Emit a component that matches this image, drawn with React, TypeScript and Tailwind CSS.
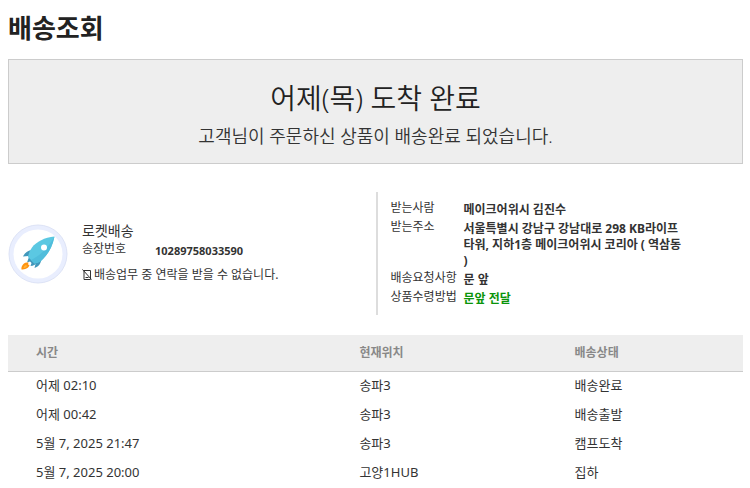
type Row = {
	time: string
	place: string
	status: string
}

const rows: Row[] = [
	{ time: '어제 02:10', place: '송파3', status: '배송완료' },
	{ time: '어제 00:42', place: '송파3', status: '배송출발' },
	{ time: '5월 7, 2025 21:47', place: '송파3', status: '캠프도착' },
	{ time: '5월 7, 2025 20:00', place: '고양1HUB', status: '집하' }
]

function Rocket() {
	return (
		<svg viewBox="0 0 60 60" className="size-15 shrink-0" aria-hidden="true">
			<circle cx="30" cy="30" r="29" fill="#e9eefe" stroke="#dde3f6" strokeWidth="1" />
			<circle cx="30" cy="30" r="24.500" fill="#fff" />
			<path d="M27 26.500c-5-1.200-9.500.5-12 6l5.500-.5 3 2z" fill="#4197bb" />
			<path d="M33 33l-5 5-1.500 6c4.500-1.500 7-5 7-11z" fill="#4197bb" />
			<path d="M21 33l-2 5.500 3-1 1.500 1.500-1 3c3 0 5-1.500 6.500-3.500z" fill="#4197bb" />
			<path
				d="M46.500 12.500c-10 1-18 5-22.500 11-2 3-3.500 6-4 9.500l6.500 6.500c3.500-.5 6-2 8.500-4.500 5.500-5.500 9.500-12.500 11.500-22.500z"
				fill="#5bc8e2"
			/>
			<path d="M46.500 12.500C42 21 33 31.500 23 36l3.500 3.500c3.500-.5 6-2 8.500-4.500 5.500-5.500 9.500-12.500 11.500-22.500z" fill="#50bddb" />
			<path d="M18.500 38.500c-3 .5-5.500 3.500-5 7 3.500 0 7-1 8-4.500l-1.500-.5.500-2z" fill="#ff9412" />
			<path d="M18 41c-1.500.5-2.500 2-2.500 3 1.500 0 3-.5 3.500-2z" fill="#ffb43b" />
			<circle cx="36" cy="23.500" r="3" fill="#fff" />
		</svg>
	)
}

function PhoneOff() {
	return (
		<svg viewBox="0 0 10 12" className="h-3 w-2.5" fill="none" stroke="#333" aria-hidden="true">
			<path d="M2 1.500h6.500v9H2zM3.500 8.500h3M.5.500l9 10" />
		</svg>
	)
}

export default function App() {
	return (
		<main className="min-w-[640px] pt-3 pr-[7px] pl-2 font-['Noto_Sans','Noto_Sans_CJK_KR',sans-serif] text-[#333]">
			<h1 className="text-[26px] leading-8 font-bold text-[#222]">배송조회</h1>

			<section className="mt-[15px] border border-[#ccc] bg-[#eee] pt-5 pb-[13px] text-center font-[350]">
				<h2 className="text-[28px] leading-9 text-[#222]">어제(목) 도착 완료</h2>
				<p className="mt-1.5 text-lg">고객님이 주문하신 상품이 배송완료 되었습니다.</p>
			</section>

			<section className="mt-7 grid grid-cols-2 text-xs">
				<div className="flex items-center gap-3.5">
					<Rocket />
					<div className="pb-1">
						<p className="text-sm">로켓배송</p>
						<dl className="flex leading-4">
							<dt className="w-[73px]">송장번호</dt>
							<dd className="pt-0.5 text-[11px] font-bold">10289758033590</dd>
						</dl>
						<p className="mt-2 flex items-center gap-0.5 leading-4">
							<PhoneOff />
							배송업무 중 연락을 받을 수 없습니다.
						</p>
					</div>
				</div>
				<dl className="grid grid-cols-[73px_220px] content-start gap-y-px border-l-2 border-[#ddd] pt-2 pb-2 pl-[13px] leading-4">
					<dt>받는사람</dt>
					<dd className="pt-0.5 font-bold">메이크어위시 김진수</dd>
					<dt>받는주소</dt>
					<dd className="pt-0.5 font-bold break-all">
						서울특별시 강남구 강남대로 298 KB라이프타워, 지하1층 메이크어위시 코리아 ( 역삼동 )
					</dd>
					<dt>배송요청사항</dt>
					<dd className="pt-0.5 font-bold">문 앞</dd>
					<dt>상품수령방법</dt>
					<dd className="pt-0.5 font-bold text-[#0a940a]">문앞 전달</dd>
				</dl>
			</section>

			<table className="mt-5 w-full table-fixed text-left text-[13px]">
				<thead className="border-b border-[#ccc] bg-[#eee] text-xs text-[#888]">
					<tr className="h-9">
						<th className="w-[44%] pl-7 font-bold">시간</th>
						<th className="w-[29%] pl-7 font-bold">현재위치</th>
						<th className="pl-[30px] font-bold">배송상태</th>
					</tr>
				</thead>
				<tbody>
					{rows.map(row => (
						<tr key={row.time} className="h-[29px]">
							<td className="pl-7">{row.time}</td>
							<td className="pl-7">{row.place}</td>
							<td className="pl-[30px]">{row.status}</td>
						</tr>
					))}
				</tbody>
			</table>
		</main>
	)
}
